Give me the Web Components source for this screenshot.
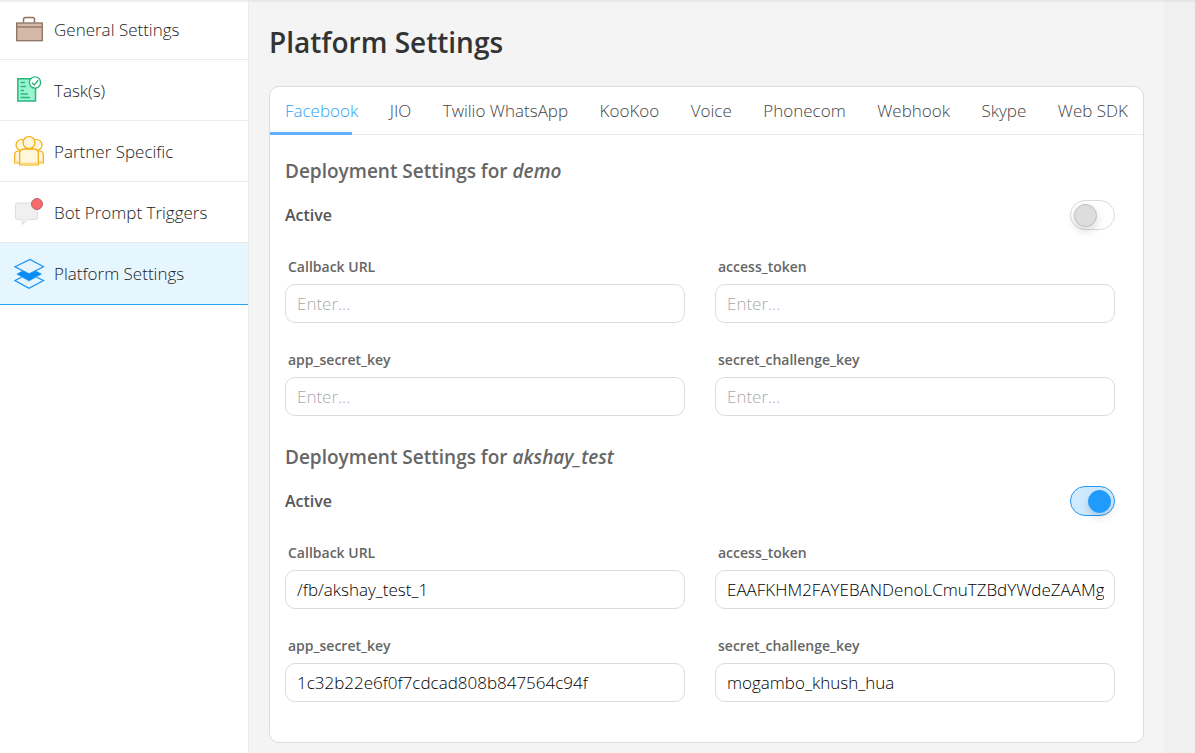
<!DOCTYPE html>
<html lang="en">
<head>
<meta charset="utf-8">
<meta name="viewport" content="width=device-width, initial-scale=1">
<title>Platform Settings</title>
<style>
  html, body { margin: 0; height: 100%; }
  body { font-family: "Open Sans", "Noto Sans", sans-serif; font-size: 17px; color: #333; background: #f4f4f4; }
</style>
</head>
<body>
<app-shell>
  <side-nav slot="nav">
    <nav-item label="General Settings">
      <svg width="32" height="32" viewBox="0 0 32 32" fill="none"><path d="M9.500 8.500V5.500Q9.500 3.500 11.500 3.500H18.500Q20.500 3.500 20.500 5.500V8.500" stroke="#8d7162" stroke-width="1.500"/><rect x="2.700" y="9" width="25.600" height="17.700" fill="#d5b9a8" stroke="#8d7162" stroke-width="1.300"/><path d="M2.500 13H28.500" stroke="#8d7162" stroke-width="1.300"/></svg>
    </nav-item>
    <nav-item label="Task(s)">
      <svg width="32" height="32" viewBox="0 0 32 32" fill="none"><path d="M3.800 4.700H21.500V27H3.800Z" fill="#98f5d0" stroke="#2db57f" stroke-width="1.500"/><path d="M6.500 8.500H11M6.500 12.500H12M6.500 16.500H10M6.500 20H14M6.500 23.500H16M12 20H13" stroke="#2db57f" stroke-width="1.500"/><circle cx="21" cy="8.500" r="5.600" fill="#fff" stroke="#2db57f" stroke-width="1.400"/><path d="M18 8.800L20.200 11L24.200 6.300" stroke="#2db57f" stroke-width="1.500"/></svg>
    </nav-item>
    <nav-item label="Partner Specific">
      <svg width="32" height="32" viewBox="0 0 32 32" fill="#fff6dc" stroke="#f2ab0b" stroke-width="1.200"><circle cx="7.500" cy="10" r="5.500"/><circle cx="22.500" cy="10" r="5.500"/><path d="M.7 28V20Q.7 16 4.500 16H10V28ZM29.300 28V20Q29.300 16 25.500 16H20V28Z"/><path d="M.7 26.300H29.300V28.500H.7Z" fill="#fbd676" stroke="none"/><circle cx="15" cy="7.500" r="6"/><path d="M5.700 30V18.500Q5.700 14.200 10 14.200H20Q24.300 14.200 24.300 18.500V30Z"/><path d="M6.200 27.800H23.800V29.500H6.200Z" fill="#fbd676" stroke="none"/></svg>
    </nav-item>
    <nav-item label="Bot Prompt Triggers">
      <svg width="32" height="32" viewBox="0 0 32 32"><path d="M3 7H22Q23.500 7 23.500 8.500V22Q23.500 23.500 22 23.500H14L8.300 28.500V23.500H3Q1.500 23.500 1.500 22V8.500Q1.500 7 3 7Z" fill="#f0f0f0" stroke="#dedede"/><circle cx="23" cy="8" r="5.500" fill="#fb6a6a" stroke="#a56068" stroke-width=".9"/></svg>
    </nav-item>
    <nav-item label="Platform Settings" active>
      <svg width="32" height="32" viewBox="0 0 32 32"><path d="M1 22.500L15 15.500L29.500 22.500L15 30.300Z" fill="#e5f4ff" stroke="#1592f8" stroke-width="1.200"/><path d="M2 16L15 9L28.500 16L15 23.500Z" fill="#0b8df7" stroke="#e5f4ff" stroke-width=".5"/><path d="M1 8.800L16 1.500L29.500 8.800L15 16Z" fill="#e5f4ff" stroke="#1592f8" stroke-width="1.200"/></svg>
    </nav-item>
  </side-nav>
  <settings-page heading="Platform Settings">
    <tab-bar items="Facebook,JIO,Twilio WhatsApp,KooKoo,Voice,Phonecom,Webhook,Skype,Web SDK"></tab-bar>
    <deployment-settings bot="demo">
      <text-field label="Callback URL"></text-field>
      <text-field label="access_token"></text-field>
      <text-field label="app_secret_key"></text-field>
      <text-field label="secret_challenge_key"></text-field>
    </deployment-settings>
    <deployment-settings bot="akshay_test" enabled>
      <text-field label="Callback URL" value="/fb/akshay_test_1"></text-field>
      <text-field label="access_token" value="EAAFKHM2FAYEBANDenoLCmuTZBdYWdeZAAMg"></text-field>
      <text-field label="app_secret_key" value="1c32b22e6f0f7cdcad808b847564c94f"></text-field>
      <text-field label="secret_challenge_key" value="mogambo_khush_hua"></text-field>
    </deployment-settings>
  </settings-page>
</app-shell>
<script>
  class Base extends HTMLElement {
    connectedCallback() {
      if (this.shadowRoot) return;
      this.attachShadow({ mode: 'open' }).innerHTML = this.render();
    }
    attr(name) { return this.getAttribute(name) || ''; }
  }

  customElements.define('app-shell', class extends Base {
    render() {
      return `<style>
        :host { display: grid; grid-template-columns: 249px minmax(0, 1fr) 31px; min-height: 100%;
          background: linear-gradient(#e4e4e4, #f4f4f4) top / 100% 3px no-repeat; }
        .gutter { background: linear-gradient(#e2e2e2, #f0f0f0) top / 100% 3px no-repeat #f0f0f0; }
      </style><slot name="nav"></slot><slot></slot><div class="gutter"></div>`;
    }
  });

  customElements.define('side-nav', class extends Base {
    render() {
      return `<style>
        :host { display: block; box-sizing: border-box; border-right: 1px solid #ebebeb;
          background: linear-gradient(#e9e9e9, #fff) top / 100% 3px no-repeat #fff; }
        nav { display: flex; flex-direction: column; }
      </style><nav><slot></slot></nav>`;
    }
  });

  customElements.define('nav-item', class extends Base {
    render() {
      return `<style>
        :host { display: block; border-bottom: 1px solid #ebebeb; }
        :host([active]) { background: #e6f6ff; border-bottom-color: #27a5f5; }
        a { display: flex; align-items: center; gap: 8px; height: 60px; padding: 0 14px;
          color: #222; font-weight: 350; text-decoration: none; white-space: nowrap; }
        :host(:first-child) a { height: 59px; }
        :host([active]) a { height: 61px; }
        ::slotted(svg) { display: block; flex: none; }
      </style><a href="#"${this.hasAttribute('active') ? ' aria-current="page"' : ''}><slot></slot><span>${this.attr('label')}</span></a>`;
    }
  });

  customElements.define('settings-page', class extends Base {
    render() {
      return `<style>
        :host { display: block; padding: 22px 20px 10px; }
        h1 { margin: 0 0 24px; font-size: 28px; line-height: 40px; font-weight: 600; color: #333; }
        .card { background: #fff; border: 1px solid #dcdcdc; border-radius: 10px; padding-bottom: 40px; }
      </style><main><h1>${this.attr('heading')}</h1><div class="card"><slot></slot></div></main>`;
    }
  });

  customElements.define('tab-bar', class extends Base {
    render() {
      const tabs = this.attr('items').split(',').map((t, i) =>
        `<button type="button" role="tab" aria-selected="${i === 0}">${t}</button>`).join('');
      return `<style>
        :host { display: block; position: relative; border-bottom: 1px solid #ebebeb; }
        [role=tablist] { display: flex; justify-content: space-between; padding: 0 15px; }
        button { height: 47px; padding: 0; border: 0; background: none; font: inherit; font-weight: 350;
          color: #444; white-space: nowrap; cursor: pointer; }
        button[aria-selected=true] { color: #2ea3f7; }
        .ink { position: absolute; left: 0; bottom: -1px; width: 82px; height: 3px; background: #64b0fd; }
      </style><div role="tablist">${tabs}</div><div class="ink"></div>`;
    }
  });

  customElements.define('deployment-settings', class extends Base {
    render() {
      return `<style>
        :host { display: block; padding: 22px 28px 0 15px; }
        :host([enabled]) { padding-top: 27px; }
        h2 { margin: 0 0 15px; font-size: 19px; line-height: 28px; font-weight: 600; color: #666; }
        .row { display: flex; justify-content: space-between; align-items: center; height: 30px; margin-bottom: 26px; }
        label { font-size: 16px; line-height: 24px; font-weight: 600; color: #555; }
        input { appearance: none; display: flex; align-items: center; box-sizing: border-box; width: 45px; height: 30px; margin: 0;
          padding: 0 3px; border: 1px solid #dcdcdc; border-radius: 15px; background: #fff; cursor: pointer; }
        input::before { content: ""; box-sizing: border-box; width: 23px; height: 23px; border-radius: 50%;
          background: #ddd; border: 1px solid #bfbfbf; box-shadow: 0 4px 8px rgba(0,0,0,.15); }
        input:checked { justify-content: flex-end; border-color: #1e9bfb; background: #cfe9ff; }
        input:checked::before { background: #1e9bfb; border-color: #1e9bfb; }
        .fields { display: grid; grid-template-columns: repeat(2, minmax(0, 1fr)); gap: 26px 30px; }
      </style>
      <section>
        <h2>Deployment Settings for <em>${this.attr('bot')}</em></h2>
        <div class="row"><label for="on">Active</label><input id="on" type="checkbox" role="switch"${this.hasAttribute('enabled') ? ' checked' : ''}></div>
        <div class="fields"><slot></slot></div>
      </section>`;
    }
  });

  customElements.define('text-field', class extends Base {
    render() {
      return `<style>
        :host { display: flex; flex-direction: column; gap: 6px; }
        label { padding-left: 3px; font-size: 14px; line-height: 22px; font-weight: 600; color: #666; }
        input { box-sizing: border-box; width: 100%; height: 39px; margin: 0; padding: 0 10px 0 11px;
          border: 1px solid #dcdcdc; border-radius: 10px; background: #fff; font: inherit; font-size: 17px; font-weight: 350; color: #000; }
        input::placeholder { color: #aaa; opacity: 1; font-weight: 300; }
      </style>
      <label for="f">${this.attr('label')}</label>
      <input id="f" type="text" placeholder="Enter..." value="${this.attr('value')}">`;
    }
  });
</script>
</body>
</html>
